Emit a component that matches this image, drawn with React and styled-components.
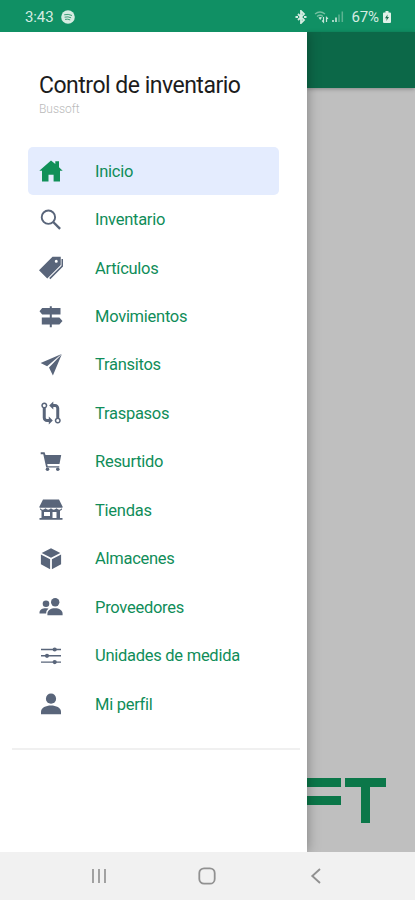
import styled, { createGlobalStyle } from "styled-components";
import { IoPricetagsSharp, IoGitCompareSharp } from "react-icons/io5";

const menu = [
  { label: "Inicio", icon: HomeIcon },
  { label: "Inventario", icon: SearchIcon },
  { label: "Artículos", icon: IoPricetagsSharp },
  { label: "Movimientos", icon: SignIcon },
  { label: "Tránsitos", icon: PlaneIcon },
  { label: "Traspasos", icon: IoGitCompareSharp },
  { label: "Resurtido", icon: CartIcon },
  { label: "Tiendas", icon: StoreIcon },
  { label: "Almacenes", icon: CubeIcon },
  { label: "Proveedores", icon: PeopleIcon },
  { label: "Unidades de medida", icon: OptionsIcon },
  { label: "Mi perfil", icon: PersonIcon },
];

function HomeIcon({ size }) {
  return (
    <svg width={size} height={size} viewBox="0 0 24 24">
      <path d="M12 1.400L16.300 5V2.300H20V8.300L23.700 11.700H21V22.400H14.600V15.800H9.500V22.400H3V11.700H.3z" fill="currentColor" />
    </svg>
  );
}

function SearchIcon({ size }) {
  return (
    <svg width={size} height={size} viewBox="0 0 24 24">
      <circle cx="9.400" cy="9.200" r="6.700" fill="none" stroke="currentColor" strokeWidth="1.900" />
      <path d="M14.200 14l6.900 6.900" stroke="currentColor" strokeWidth="2.400" />
    </svg>
  );
}

function SignIcon({ size }) {
  return (
    <svg width={size} height={size} viewBox="0 0 24 24" fill="currentColor">
      <path d="M.5 6.300L3.200 3h7.600V1.200h2V3h8.700v6.600h-8.700v3h7.600l3.100 3.400-3.100 3.500h-7.600v2.800h-2v-2.800h-8v-6.900h8v-3H3.200z" />
    </svg>
  );
}

function PlaneIcon({ size }) {
  return (
    <svg width={size} height={size} viewBox="0 0 24 24" fill="currentColor">
      <path d="M22.600 1L1.600 10l6.500 3.200zM22.800 1.200L10 14.600l3.900 8z" />
    </svg>
  );
}

function CartIcon({ size }) {
  return (
    <svg width={size} height={size} viewBox="0 0 24 24" fill="currentColor">
      <path d="M1.700 2.300h3.900L6.500 5H22.200l-1.700 9H8.200l.5 2.200h11.600v1.300H7.200L4.300 4.200H1.700z" />
      <circle cx="8.500" cy="19.300" r="1.800" />
      <circle cx="18.800" cy="19.300" r="1.800" />
    </svg>
  );
}

function StoreIcon({ size }) {
  return (
    <svg width={size} height={size} viewBox="0 0 24 24" fill="currentColor">
      <path d="M4 1.500h16L23.500 8.500v1.300H.5V8.500z" />
      <path d="M1 10.300q2.700 2.800 5.500 0q2.700 2.800 5.500 0q2.700 2.800 5.500 0q2.700 2.800 5.500 0v1.200q-1.500 1.300-2 1.200v7.300h2.500v1.800H.5V20h2v-7.300L1 11.500z M5 14v4h6v-4z M13.500 14v6h4v-6z" fillRule="evenodd" />
    </svg>
  );
}

function CubeIcon({ size }) {
  return (
    <svg width={size} height={size} viewBox="0 0 24 24" fill="currentColor">
      <path d="M12 1.300l9.300 4.600L12 10.700 2.700 5.900zM1.900 7.500l9.200 4.700V22.300l-9.200-5zM22.100 7.500l-9.200 4.700V22.300l9.200-5z" />
    </svg>
  );
}

function PeopleIcon({ size }) {
  return (
    <svg width={size} height={size} viewBox="0 0 24 24" fill="currentColor">
      <circle cx="16.200" cy="7.300" r="4.200" />
      <circle cx="7" cy="8.700" r="3.300" />
      <path d="M8.400 20.300v-1.500c0-3.500 3.400-5.500 7.600-5.500s7.600 2 7.600 5.500v1.500z" />
      <path d="M.5 18.400v-1c0-2.700 2.900-4.200 6.300-4.200q1.500 0 2.700.4-2.300 2-2.400 4.800z" />
    </svg>
  );
}

function OptionsIcon({ size }) {
  return (
    <svg width={size} height={size} viewBox="0 0 24 24" fill="currentColor">
      <path d="M2 5.500h20M2 11.800h20M2 18.100h20" stroke="currentColor" strokeWidth="1.400" />
      <circle cx="15.700" cy="5.500" r="2.100" />
      <circle cx="8" cy="11.800" r="2.100" />
      <circle cx="15.700" cy="18.100" r="2.100" />
    </svg>
  );
}

function PersonIcon({ size }) {
  return (
    <svg width={size} height={size} viewBox="0 0 24 24" fill="currentColor">
      <circle cx="12" cy="6.700" r="5.100" />
      <path d="M2 22.200v-2.500c0-4 5-6.200 10-6.200s10 2.200 10 6.200v2.500z" />
    </svg>
  );
}

function StatusBar() {
  return (
    <StatusBarStyle>
      <span>3:43</span>
      <svg className="music" width="14" height="14" viewBox="0 0 14 14">
        <circle cx="7" cy="7" r="6.8" fill="#d5ece2" />
        <path d="M3.2 4.8q4-1.2 7.8.7M3.6 7.2q3.4-1 6.5.6M4 9.4q2.8-.7 5.2.5" fill="none" stroke="#3d9c77" strokeWidth="1" />
      </svg>
      <div className="right">
        <svg width="12" height="14" viewBox="0 0 12 14">
          <path d="M3 4l6 6-3 3V1l3 3-6 6" fill="none" stroke="#d5ece2" strokeWidth="1.8" />
          <path d="M.5 7h2.500M9 7h2.500" stroke="#d5ece2" strokeWidth="2" />
        </svg>
        <svg className="wifi" width="15" height="14" viewBox="0 0 15 14">
          <path d="M1 4q5-4 10 0M3 6.5q3-2.5 6 0" fill="none" stroke="#75c0a1" strokeWidth="1.3" />
          <path d="M4.5 7.5q2-1 3.5 0L6.2 10z" fill="#c8e6da" />
          <path d="M9.5 7v5l-1.4-1.5M12.5 12V7.5l1.5 1.4" fill="none" stroke="#c8e6da" strokeWidth="1.2" />
        </svg>
        <svg className="signal" width="12" height="12" viewBox="0 0 12 12">
          <path d="M1 9v2M4 6.5V11" stroke="#d5ece2" strokeWidth="1.5" />
          <path d="M7 3.5V11M10.3 .5V11" stroke="#5cb391" strokeWidth="1.5" />
        </svg>
        <span>67%</span>
        <svg className="battery" width="8" height="12" viewBox="0 0 8 12">
          <path d="M2.5 0h3v1.5H7q1 0 1 1V11q0 1-1 1H1q-1 0-1-1V2.500q0-1 1-1h1.500z" fill="#e0f1e9" />
          <path d="M4.600 3.500L2 7.300h1.700L3.300 10l2.700-4H4.300z" fill="#176e4c" />
        </svg>
      </div>
    </StatusBarStyle>
  );
}

function MenuItem({ label, icon: Icon, active }) {
  return (
    <MenuItemStyle $active={active}>
      <Icon size={24} />
      <span>{label}</span>
    </MenuItemStyle>
  );
}

function Drawer() {
  return (
    <DrawerStyle>
      <h1>Control de inventario</h1>
      <p>Bussoft</p>
      <MenuList>
        {menu.map((item, i) => (
          <MenuItem key={item.label} label={item.label} icon={item.icon} active={i === 0} />
        ))}
      </MenuList>
      <hr />
    </DrawerStyle>
  );
}

function NavBar() {
  return (
    <NavBarStyle>
      <svg width="16" height="16" viewBox="0 0 16 16">
        <path d="M2 1v14M8 1v14M14 1v14" stroke="#999" strokeWidth="1.8" />
      </svg>
      <svg width="18" height="18" viewBox="0 0 18 18">
        <rect x="1.300" y="1.300" width="15.400" height="15.400" rx="4.800" fill="none" stroke="#919191" strokeWidth="1.800" />
      </svg>
      <svg width="18" height="16" viewBox="0 0 18 16">
        <path d="M14 1L6.300 8l7.700 7" fill="none" stroke="#919191" strokeWidth="1.900" />
      </svg>
    </NavBarStyle>
  );
}

export default function App() {
  return (
    <Wrapper>
      <GlobalStyle />
      <StatusBar />
      <Main>
        <Drawer />
        <Page>
          <PageHeader />
          <svg className="logo" width="80" height="46" viewBox="0 0 80 46">
            <path d="M0 0h34v9H0zM0 18h34v9H0zM38 0h41v9H63v36h-9V9H38z" fill="#0b7749" />
          </svg>
        </Page>
      </Main>
      <NavBar />
    </Wrapper>
  );
}

const GlobalStyle = createGlobalStyle`
* {
  box-sizing: border-box;
}
body {
  margin: 0;
  font-family: Roboto, sans-serif;
}
svg {
  display: block;
  flex-shrink: 0;
}
`;

const Wrapper = styled.div`
  width: 415px;
  height: 900px;
  display: flex;
  flex-direction: column;
  overflow: hidden;
`;

const StatusBarStyle = styled.header`
height: 32px;
flex-shrink: 0;
padding: 2px 24px 0 25px;
display: flex;
align-items: center;
background: #109064;
color: #d5ece2;
font-size: 15px;
letter-spacing: -0.1px;

.music {
  margin-left: 7px;
}
.right {
  margin-left: auto;
  display: flex;
  align-items: center;
}
.wifi {
  margin-left: 7px;
}
.signal {
  margin: 0 7px 0 3px;
}
.battery {
  margin-left: 4px;
}
`;

const Main = styled.main`
display: flex;
height: 820px;
flex-shrink: 0;
`;

const DrawerStyle = styled.aside`
width: 307px;
flex-shrink: 0;
background: #fff;
z-index: 1;
box-shadow: 0 0 12px rgba(0, 0, 0, 0.35);
clip-path: inset(0 -20px 0 0);

h1 {
  margin: 40px 0 0 39px;
  font-size: 23px;
  line-height: 28px;
  font-weight: 400;
  color: #1c1c1c;
  letter-spacing: -0.5px;
  white-space: nowrap;
}
p {
  margin: 2px 0 0 39px;
  font-size: 12px;
  line-height: 15px;
  font-weight: 300;
  color: #b9b9b9;
}
hr {
  margin: 20px 7px 0 12px;
  border: 0;
  height: 2px;
  background: #f0f0f0;
}
`;

const MenuList = styled.nav`
padding: 30px 28px 0;
`;

const MenuItemStyle = styled.div`
height: 48.45px;
width: 251px;
padding-left: 11px;
display: flex;
align-items: center;
gap: 32px;
border-radius: 5px;
background: ${props => (props.$active ? "#e4ecfe" : "transparent")};
color: ${props => (props.$active ? "#109058" : "#59657a")};

span {
  padding-top: 1px;
  color: #108d59;
  font-size: 16.5px;
  line-height: 20px;
  letter-spacing: -0.27px;
  white-space: nowrap;
}
`;

const Page = styled.section`
flex: 1;
display: flex;
flex-direction: column;
background: #bfbfbf;

.logo {
  margin-top: 690px;
}
`;

const PageHeader = styled.div`
height: 56px;
flex-shrink: 0;
background: #0c6848;
box-shadow: 0 1px 4px rgba(0, 0, 0, 0.3);
`;

const NavBarStyle = styled.footer`
height: 48px;
flex-shrink: 0;
display: flex;
align-items: center;
justify-content: space-between;
padding: 0 91px;
background: #f1f1f1;
`;
